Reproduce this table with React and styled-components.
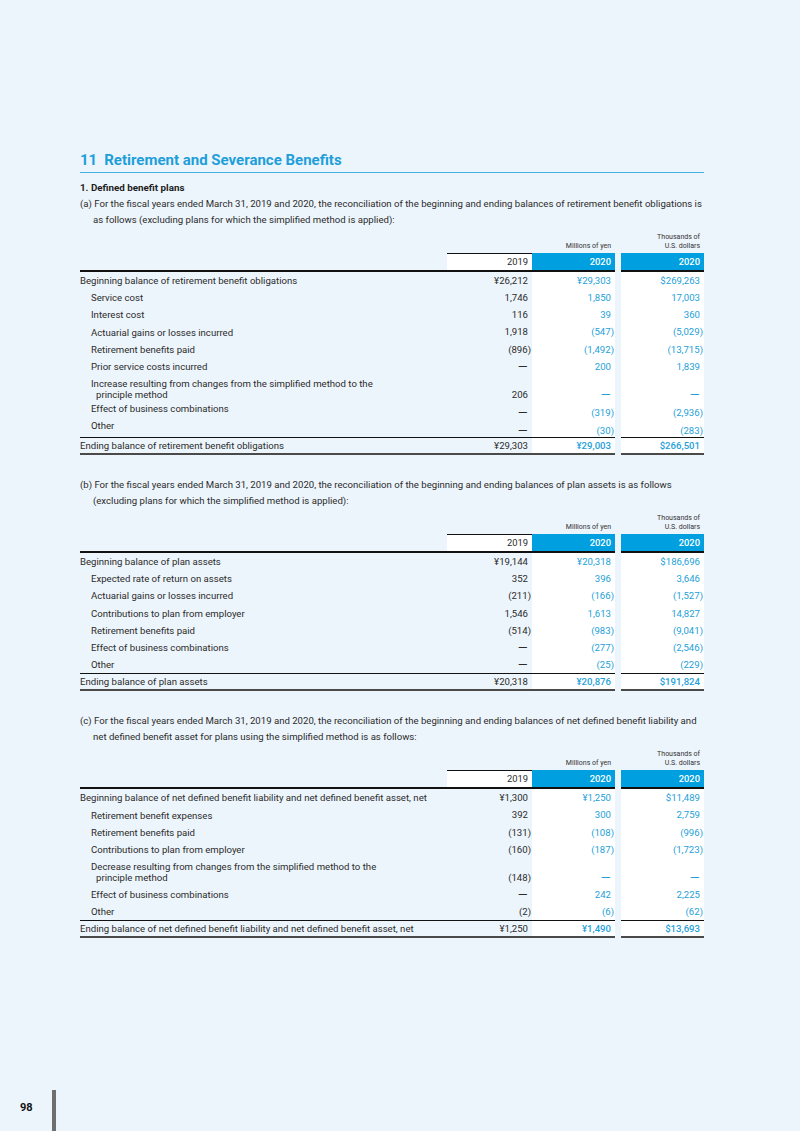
import React from 'react'
import styled, { createGlobalStyle } from 'styled-components'

const GlobalStyle = createGlobalStyle`
  html, body {
    margin: 0;
    padding: 0;
    background: #EDF5FC;
  }
  body {
    font-family: Roboto, "Liberation Sans", sans-serif;
    color: #2b2b2b;
  }
`

const BLUE = '#1E9FD9'
const BLUE_BG = '#00A0E0'
const COLS = '367px 85px 83px 6px 83px'

const tables = [
  {
    key: 'a',
    text: ['(a) For the fiscal years ended March 31, 2019 and 2020, the reconciliation of the beginning and ending balances of retirement benefit obligations is', 'as follows (excluding plans for which the simplified method is applied):'],
    rows: [
      ['Beginning balance of retirement benefit obligations', 0, '¥26,212', '¥29,303', '$269,263'],
      ['Service cost', 1, '1,746', '1,850', '17,003'],
      ['Interest cost', 1, '116', '39', '360'],
      ['Actuarial gains or losses incurred', 1, '1,918', '(547)', '(5,029)'],
      ['Retirement benefits paid', 1, '(896)', '(1,492)', '(13,715)'],
      ['Prior service costs incurred', 1, '—', '200', '1,839'],
      [['Increase resulting from changes from the simplified method to the', 'principle method'], 1, '206', '—', '—'],
      ['Effect of business combinations', 2, '—', '(319)', '(2,936)'],
      ['Other', 2, '—', '(30)', '(283)'],
    ],
    total: ['Ending balance of retirement benefit obligations', '¥29,303', '¥29,003', '$266,501'],
  },
  {
    key: 'b',
    text: ['(b) For the fiscal years ended March 31, 2019 and 2020, the reconciliation of the beginning and ending balances of plan assets is as follows', '(excluding plans for which the simplified method is applied):'],
    rows: [
      ['Beginning balance of plan assets', 0, '¥19,144', '¥20,318', '$186,696'],
      ['Expected rate of return on assets', 1, '352', '396', '3,646'],
      ['Actuarial gains or losses incurred', 1, '(211)', '(166)', '(1,527)'],
      ['Contributions to plan from employer', 1, '1,546', '1,613', '14,827'],
      ['Retirement benefits paid', 1, '(514)', '(983)', '(9,041)'],
      ['Effect of business combinations', 1, '—', '(277)', '(2,546)'],
      ['Other', 1, '—', '(25)', '(229)'],
    ],
    total: ['Ending balance of plan assets', '¥20,318', '¥20,876', '$191,824'],
  },
  {
    key: 'c',
    text: ['(c) For the fiscal years ended March 31, 2019 and 2020, the reconciliation of the beginning and ending balances of net defined benefit liability and', 'net defined benefit asset for plans using the simplified method is as follows:'],
    rows: [
      ['Beginning balance of net defined benefit liability and net defined benefit asset, net', 0, '¥1,300', '¥1,250', '$11,489'],
      ['Retirement benefit expenses', 1, '392', '300', '2,759'],
      ['Retirement benefits paid', 1, '(131)', '(108)', '(996)'],
      ['Contributions to plan from employer', 1, '(160)', '(187)', '(1,723)'],
      [['Decrease resulting from changes from the simplified method to the', 'principle method'], 1, '(148)', '—', '—'],
      ['Effect of business combinations', 1, '—', '242', '2,225'],
      ['Other', 1, '(2)', '(6)', '(62)'],
    ],
    total: ['Ending balance of net defined benefit liability and net defined benefit asset, net', '¥1,250', '¥1,490', '$13,693'],
  },
]

function Val({ v }) {
  if (v === '—') return <Dash>—</Dash>
  if (v.startsWith('(')) {
    return <>{v.slice(0, -1)}<Hang>)</Hang></>
  }
  return v
}

function Report() {
  return (
    <Page>
      <Main>
        <Title><span>11</span>Retirement and Severance Benefits</Title>
        <SubHead>1. Defined benefit plans</SubHead>
        {tables.map((t, ti) => (
          <Section key={t.key} $first={ti === 0}>
            <Para>{t.text[0]}<br />{t.text[1]}</Para>
            <Units>
              <div />
              <div />
              <UnitLabel>Millions of yen</UnitLabel>
              <div />
              <UnitLabel>Thousands of<br />U.S. dollars</UnitLabel>
            </Units>
            <HeadRow>
              <HeadCell />
              <HeadCell $prior>2019</HeadCell>
              <HeadCell $blue>2020</HeadCell>
              <Gap />
              <HeadCell $blue>2020</HeadCell>
            </HeadRow>
            {t.rows.map((r, i) => {
              const twoLine = Array.isArray(r[0])
              return (
                <BodyRow key={i} $tall={twoLine}>
                  <Label $level={r[1]} $tall={twoLine} $skew={r[1] === 2}>
                    {twoLine ? <>{r[0][0]}<br />{r[0][1]}</> : r[0]}
                  </Label>
                  <Num $tall={twoLine} $skew={r[1] === 2}><Val v={r[2]} /></Num>
                  <Num $cur $tall={twoLine} $skew={r[1] === 2}><Val v={r[3]} /></Num>
                  <Gap />
                  <Num $cur $tall={twoLine} $skew={r[1] === 2}><Val v={r[4]} /></Num>
                </BodyRow>
              )
            })}
            <TotalRow>
              <TotalCell $label>{t.total[0]}</TotalCell>
              <TotalCell>{t.total[1]}</TotalCell>
              <TotalCell $cur>{t.total[2]}</TotalCell>
              <Gap />
              <TotalCell $cur>{t.total[3]}</TotalCell>
            </TotalRow>
          </Section>
        ))}
      </Main>
      <Footer>
        <PageNo>98</PageNo>
        <Bar />
      </Footer>
    </Page>
  )
}

export default function App() {
  return (
    <>
      <GlobalStyle />
      <Report />
    </>
  )
}

const Page = styled.div`
  width: 800px;
  min-height: 1131px;
  display: flex;
  flex-direction: column;
  background: #EDF5FC;
`

const Main = styled.div`
  padding: 151px 96px 0 80px;
  width: 624px;
`

const Title = styled.h2`
  margin: 0;
  font-size: 15px;
  line-height: 18px;
  font-weight: 700;
  color: ${BLUE};
  padding-bottom: 3px;
  border-bottom: 1px solid #45B0E4;
  span {
    margin-right: 7px;
  }
`

const SubHead = styled.h3`
  margin: 7px 0 0;
  font-size: 9.8px;
  line-height: 16px;
  font-weight: 700;
  color: #1d1d1d;
`

const Section = styled.section`
  margin-top: ${p => (p.$first ? '0' : '22px')};
`

const Para = styled.p`
  margin: 0;
  font-size: 9.6px;
  line-height: 16px;
  padding-left: 13px;
  text-indent: -13px;
`

const Units = styled.div`
  display: grid;
  grid-template-columns: ${COLS};
  align-items: end;
  margin: 5px 0 2px;
`

const UnitLabel = styled.div`
  font-size: 7px;
  line-height: 9px;
  text-align: right;
  padding-right: 4px;
  color: #333;
`

const HeadRow = styled.div`
  display: grid;
  grid-template-columns: ${COLS};
`

const HeadCell = styled.div`
  height: 16px;
  line-height: 16px;
  font-size: 9.4px;
  text-align: right;
  padding-right: 4px;
  border-bottom: 2px solid #111;
  border-top: 1px solid ${p => (p.$prior ? '#111' : p.$blue ? BLUE_BG : 'transparent')};
  background: ${p => (p.$prior ? '#fff' : p.$blue ? BLUE_BG : 'transparent')};
  color: ${p => (p.$blue ? '#fff' : '#2b2b2b')};
  font-weight: ${p => (p.$blue ? 500 : 400)};
`

const Gap = styled.div``

const BodyRow = styled.div`
  display: grid;
  grid-template-columns: ${COLS};
  height: ${p => (p.$tall ? '27.6px' : '17.2px')};
`

const Label = styled.div`
  font-size: 9.6px;
  line-height: ${p => (p.$tall ? '11.5px' : '17.2px')};
  padding-left: ${p => (p.$level ? (p.$tall ? '16px' : '11px') : '0')};
  text-indent: ${p => (p.$tall ? '-5px' : '0')};
  padding-top: ${p => (p.$tall ? '2.5px' : '0')};
  margin-top: ${p => (p.$skew ? '-2.5px' : '0')};
  white-space: nowrap;
`

const Num = styled.div`
  font-size: 9.6px;
  text-align: right;
  padding-right: 4px;
  display: flex;
  justify-content: flex-end;
  align-items: ${p => (p.$tall ? 'flex-end' : 'center')};
  padding-bottom: ${p => (p.$tall ? '2.5px' : '0')};
  padding-top: ${p => (p.$skew ? '3.5px' : '0')};
  line-height: 11.5px;
  background: ${p => (p.$cur ? '#fff' : 'transparent')};
  color: ${p => (p.$cur ? BLUE : '#2b2b2b')};
`

const Dash = styled.span`
  display: inline-block;
  font-size: 11px;
  transform: scaleX(1.15);
  transform-origin: right center;
`

const Hang = styled.span`
  margin-right: -3px;
`

const TotalRow = styled.div`
  display: grid;
  grid-template-columns: ${COLS};
`

const TotalCell = styled.div`
  font-size: 9.6px;
  line-height: 15px;
  text-align: ${p => (p.$label ? 'left' : 'right')};
  padding-right: ${p => (p.$label ? '0' : '4px')};
  border-top: 1px solid #111;
  border-bottom: 2px solid #4a4a4a;
  background: ${p => (p.$cur ? '#fff' : 'transparent')};
  color: ${p => (p.$cur ? BLUE : '#2b2b2b')};
  font-weight: ${p => (p.$cur ? 500 : 400)};
`

const Footer = styled.footer`
  margin-top: auto;
  display: flex;
  align-items: flex-start;
  padding-left: 20px;
  height: 41px;
`

const PageNo = styled.div`
  margin-top: 12px;
  font-size: 11px;
  line-height: 12px;
  font-weight: 700;
  color: #111;
  width: 32px;
`

const Bar = styled.div`
  width: 4px;
  height: 41px;
  background: #6f6f6f;
`
